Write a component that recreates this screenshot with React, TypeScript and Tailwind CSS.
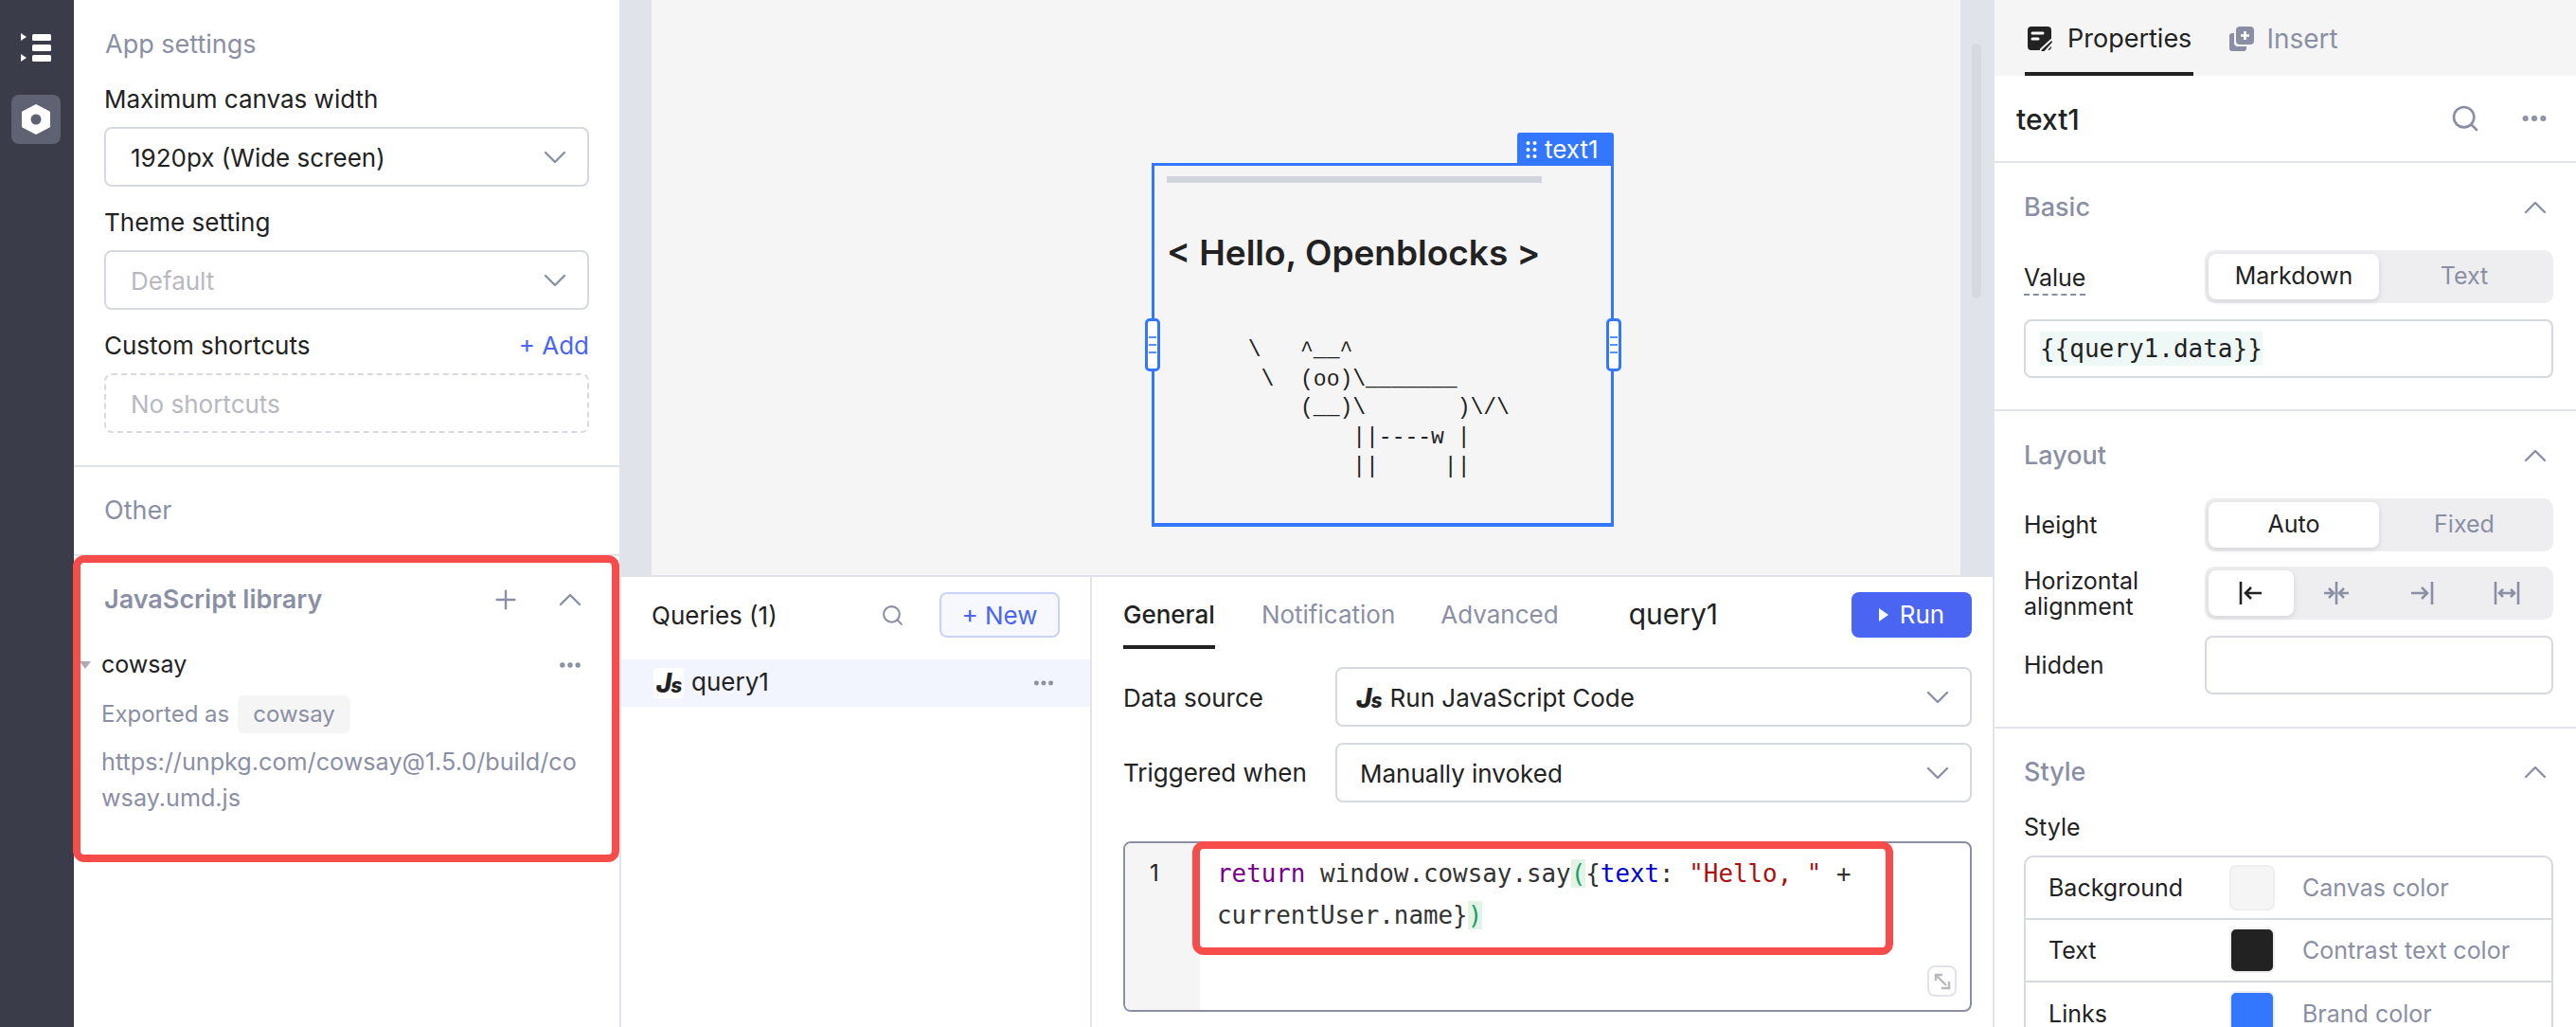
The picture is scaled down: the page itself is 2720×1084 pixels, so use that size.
import React from 'react';
import { MoreHorizontal, Plus, Search } from 'lucide-react';

const Chevron: React.FC<{ up?: boolean }> = ({ up }) => (
  <svg width="24" height="14" viewBox="0 0 24 14" fill="none" stroke="#8b8fa3" strokeWidth="2.4" strokeLinecap="round" strokeLinejoin="round" className={up ? 'rotate-180' : ''}>
    <path d="M2 2l10 10L22 2" />
  </svg>
);

const FieldLabel: React.FC<{ children: React.ReactNode; className?: string }> = ({ children, className = '' }) => (
  <div className={`h-[36px] leading-[36px] text-[26px] text-[#222222] ${className}`}>{children}</div>
);

const SelectBox: React.FC<{ children: React.ReactNode; className?: string }> = ({ children, className = '' }) => (
  <div className={`h-[63px] border-2 border-[#d7d9e0] rounded-[8px] bg-white flex items-center justify-between pl-[26px] pr-[22px] text-[26px] ${className}`}>
    <div className="flex items-center min-w-0 pt-[2px]">{children}</div>
    <Chevron />
  </div>
);

const SectionTitle: React.FC<{ title: string; className?: string }> = ({ title, className = '' }) => (
  <div className={`flex items-center justify-between text-[27px] font-medium text-[#8b8fa3] pt-[2px] pr-[7px] ${className}`}>
    <span>{title}</span>
    <Chevron up />
  </div>
);

const Segmented: React.FC<{ active: string; other: string }> = ({ active, other }) => (
  <div className="w-[368px] h-[56px] rounded-[10px] bg-[#eeeef1] p-[4px] flex text-[25px]">
    <div className="w-[180px] h-[48px] rounded-[8px] bg-white shadow-[0_2px_6px_rgba(0,0,0,0.12)] flex items-center justify-center text-[#222222]">{active}</div>
    <div className="flex-1 flex items-center justify-center text-[#8b8fa3]">{other}</div>
  </div>
);

const JsLogo = () => (
  <span className="italic font-extrabold leading-none text-[#222222] tracking-[-1px] flex items-baseline">
    <span className="text-[28px]">J</span>
    <span className="text-[21px]">s</span>
  </span>
);

const AlignIcon: React.FC<{ kind: 'left' | 'center' | 'right' | 'fill'; color: string }> = ({ kind, color }) => {
  const paths = {
    left: 'M3 2v24M25 14H8M14 8l-6 6 6 6',
    center: 'M14 2v24M1 14h9M6 9l5 5-5 5M27 14h-9M22 9l-5 5 5 5',
    right: 'M25 2v24M3 14h17M14 8l6 6-6 6',
    fill: 'M2 2v24M26 2v24M6 14h16M10 10l-4 4 4 4M18 10l4 4-4 4',
  };
  return (
    <svg width="28" height="28" viewBox="0 0 28 28" fill="none" stroke={color} strokeWidth="2.6">
      <path d={paths[kind]} />
    </svg>
  );
};

const StyleRow: React.FC<{ label: string; swatch: string; hint: string; last?: boolean }> = ({ label, swatch, hint, last }) => (
  <div className={`h-[66px] flex items-center text-[25px] ${last ? '' : 'border-b-2 border-[#d7d9e0]'}`}>
    <span className="w-[215px] pl-[24px] pt-[2px] text-[#222222]">{label}</span>
    <span className="w-[48px] h-[48px] rounded-[7px] border-2 border-[#eeeeee]" style={{ background: swatch }} />
    <span className="ml-[29px] pt-[2px] text-[#8b8fa3]">{hint}</span>
  </div>
);

export default function App() {
  return (
    <div className="relative w-[2720px] h-[1084px] overflow-hidden flex bg-white text-[#222222] font-['Inter',sans-serif]">
      {/* Icon rail */}
      <aside className="w-[78px] shrink-0 bg-[#3a3c49] flex flex-col items-center pt-[35px] pr-[2px]">
        <svg width="32" height="30" viewBox="0 0 32 30" fill="white">
          <path d="M0 0l6 4-6 4zM0 22l6 4-6 4z" />
          <rect x="12" y="1" width="20" height="7" rx="1.5" />
          <rect x="12" y="12" width="20" height="7" rx="1.5" />
          <rect x="12" y="23" width="20" height="7" rx="1.5" />
        </svg>
        <div className="mt-[35px] w-[52px] h-[52px] rounded-[8px] bg-[#5f6273] flex items-center justify-center">
          <svg width="30" height="32" viewBox="0 0 30 32">
            <path d="M15 0.5L29.5 8v16L15 31.5 0.5 24V8z" fill="white" stroke="white" strokeLinejoin="round" />
            <circle cx="15" cy="16" r="5.5" fill="#5f6273" />
          </svg>
        </div>
      </aside>

      {/* App settings */}
      <div className="w-[578px] shrink-0 border-r-2 border-[#e1e3eb]">
        <div className="h-[493px] border-b-2 border-[#e1e3eb] px-[32px]">
          <div className="h-[87px] pt-[27px] pl-[1px] leading-[40px] text-[27px] text-[#8b8fa3]">App settings</div>
          <FieldLabel className="mb-[11px]">Maximum canvas width</FieldLabel>
          <SelectBox>1920px (Wide screen)</SelectBox>
          <FieldLabel className="mt-[20px] mb-[11px]">Theme setting</FieldLabel>
          <SelectBox className="text-[#b8b9bf]">Default</SelectBox>
          <div className="mt-[20px] mb-[11px] flex justify-between">
            <FieldLabel>Custom shortcuts</FieldLabel>
            <FieldLabel className="!text-[#4965f2]">+ Add</FieldLabel>
          </div>
          <div className="h-[63px] border-2 border-dashed border-[#d7d9e0] rounded-[8px] flex items-center pl-[26px] pt-[2px] text-[26px] text-[#b8b9bf]">No shortcuts</div>
        </div>
        <div className="h-[94px] border-b-2 border-[#e1e3eb] px-[32px] flex items-center text-[27px] text-[#8b8fa3]">Other</div>
        <div className="px-[32px]">
          <div className="h-[90px] pt-[2px] flex items-center justify-between text-[27px] font-semibold text-[#8b8fa3]">
            <span>JavaScript library</span>
            <div className="flex items-center gap-[40px]">
              <Plus className="w-[32px] h-[32px]" strokeWidth={1.8} />
              <span className="mr-[8px]"><Chevron up /></span>
            </div>
          </div>
          <div className="relative h-[50px] flex items-center justify-between ml-[-3px] text-[25px]">
            <span className="absolute left-[-23px] top-[21px] w-0 h-0 border-x-[6px] border-x-transparent border-t-[8px] border-t-[#a9abb5]" />
            <span>cowsay</span>
            <MoreHorizontal className="w-[28px] h-[28px] text-[#8b8fa3] mr-[6px]" strokeWidth={2.6} />
          </div>
          <div className="mt-[7px] h-[40px] flex items-center ml-[-3px] text-[24px] text-[#8b8fa3]">
            <span>Exported as</span>
            <span className="ml-[9px] h-[40px] px-[16px] rounded-[6px] bg-[#f5f5f5] flex items-center">cowsay</span>
          </div>
          <div className="mt-[11px] ml-[-3px] w-[510px] leading-[38px] text-[25.2px] text-[#8b8fa3] break-all">
            https://unpkg.com/cowsay@1.5.0/build/cowsay.umd.js
          </div>
        </div>
      </div>

      {/* Canvas and query editor */}
      <div className="w-[1448px] shrink-0 flex flex-col">
        <div className="h-[607px] shrink-0 bg-[#e1e3eb] px-[32px] pr-[34px] flex">
          <div className="relative flex-1 bg-[#f5f5f5] pt-[172px] pl-[528px]">
            <div className="relative w-[488px] h-[384px] border-[3px] border-[#3377ff] border-b-4 pl-[13px] pt-[11px]">
              <div className="absolute right-[-3px] top-[-35px] w-[102px] h-[35px] bg-[#3377ff] rounded-t-[3px] flex items-center pl-[9px] gap-[8px] text-white text-[26px]">
                <svg width="12" height="20" viewBox="0 0 12 20" fill="white">
                  <circle cx="2.5" cy="3" r="2" /><circle cx="9.5" cy="3" r="2" />
                  <circle cx="2.5" cy="10" r="2" /><circle cx="9.5" cy="10" r="2" />
                  <circle cx="2.5" cy="17" r="2" /><circle cx="9.5" cy="17" r="2" />
                </svg>
                text1
              </div>
              {['left-[-10px]', 'right-[-11px]'].map((pos) => (
                <div key={pos} className={`absolute ${pos} top-[161px] w-[16px] h-[56px] bg-white border-[3px] border-[#3377ff] rounded-[5px] flex flex-col items-center justify-center gap-[6px]`}>
                  <span className="w-[8px] h-[2px] bg-[#5b8fff]" />
                  <span className="w-[8px] h-[2px] bg-[#5b8fff]" />
                  <span className="w-[8px] h-[2px] bg-[#5b8fff]" />
                </div>
              ))}
              <div className="w-[396px] h-[7px] bg-[#d1d5db]" />
              <div className="mt-[50px] text-[37px] font-semibold leading-[48px] text-[#222222]">{'< Hello, Openblocks >'}</div>
              <pre className="mt-[64px] ml-[3px] font-['Liberation_Mono',monospace] text-[23px] leading-[30.7px] text-[#222222]">{`      \\   ^__^
       \\  (oo)\\_______
          (__)\\       )\\/\\
              ||----w |
              ||     ||`}</pre>
            </div>
            <div className="absolute right-[-22px] top-[46px] w-[10px] h-[269px] rounded-full bg-[#d7d9e0]" />
          </div>
        </div>

        <div className="flex-1 flex border-t-2 border-[#e1e3eb] bg-white">
          {/* Query list */}
          <div className="w-[497px] shrink-0 border-r-2 border-[#e1e3eb]">
            <div className="h-[80px] flex items-center justify-between pl-[32px] pr-[32px]">
              <span className="text-[26px]">Queries (1)</span>
              <div className="flex items-center gap-[37px]">
                <Search className="w-[25px] h-[25px] text-[#8b8fa3]" strokeWidth={2} />
                <div className="w-[127px] h-[48px] rounded-[8px] border-2 border-[#c9d3fa] bg-[#f6f8fe] flex items-center justify-center text-[26px] text-[#4965f2]">+ New</div>
              </div>
            </div>
            <div className="mt-[7px] h-[50px] bg-[#f2f5fd] flex items-center pl-[34px] pr-[36px] text-[26px]">
              <span className="w-[32px] h-[32px] rounded-[3px] bg-white flex items-center justify-center"><JsLogo /></span>
              <span className="ml-[8px] flex-1 pb-[3px]">query1</span>
              <MoreHorizontal className="w-[26px] h-[26px] text-[#8b8fa3]" strokeWidth={2.6} />
            </div>
          </div>

          {/* Query config */}
          <div className="flex-1 pl-[33px] pr-[22px]">
            <div className="h-[79px] flex items-center text-[26px] text-[#8b8fa3]">
              <div className="relative text-[#222222] font-medium">
                General
                <span className="absolute left-0 right-0 top-[52px] h-[4px] bg-[#222222]" />
              </div>
              <span className="ml-[49px]">Notification</span>
              <span className="ml-[48px]">Advanced</span>
              <span className="ml-[74px] text-[30px] text-[#222222]">query1</span>
              <div className="ml-auto w-[127px] h-[48px] rounded-[8px] bg-[#4965f2] flex items-center justify-center gap-[12px] text-white">
                <svg width="10" height="14" viewBox="0 0 10 14" fill="white"><path d="M0 0l10 7-10 7z" /></svg>
                Run
              </div>
            </div>
            <div className="mt-[16px] flex items-center">
              <span className="w-[224px] pt-[2px] text-[26px]">Data source</span>
              <SelectBox className="flex-1 !pl-[20px]"><JsLogo /><span className="ml-[9px]">Run JavaScript Code</span></SelectBox>
            </div>
            <div className="mt-[17px] flex items-center">
              <span className="w-[224px] text-[26px]">Triggered when</span>
              <SelectBox className="flex-1 !pl-[24px]">Manually invoked</SelectBox>
            </div>
            <div className="relative mt-[41px] h-[180px] rounded-[8px] border-2 border-[#8b8fa3] flex overflow-hidden">
              <div className="w-[79px] bg-[#f5f5f5] pl-[26px] pt-[10px] leading-[44px] text-[24px]">1</div>
              <div className="pl-[18px] pt-[10px] font-['DejaVu_Sans_Mono',monospace] text-[25.87px] leading-[44px] whitespace-pre text-[#333333]">
                <div>
                  <span className="text-[#770088]">return</span> window.cowsay.say<span className="bg-[#e3f4e6] text-[#22a06b]">(</span>{'{'}<span className="text-[#0000cc]">text</span>: <span className="text-[#aa1111]">"Hello, "</span> +
                </div>
                <div>
                  currentUser.name{'}'}<span className="bg-[#e3f4e6] text-[#22a06b]">)</span>
                </div>
              </div>
              <div className="absolute right-[14px] bottom-[14px] w-[31px] h-[33px] rounded-[8px] border-2 border-[#e1e3eb] bg-white flex items-center justify-center">
                <svg width="18" height="20" viewBox="0 0 18 20" fill="none" stroke="#b8b9bf" strokeWidth="2.4"><path d="M2 9V3h7M2 3l11 11M16 10v7H8" /></svg>
              </div>
            </div>
          </div>
        </div>
      </div>

      {/* Properties panel */}
      <div className="w-[616px] shrink-0 border-l-2 border-[#e1e3eb]">
        <div className="h-[80px] bg-[#f5f5f5] flex items-center pl-[32px] text-[27px]">
          <div className="relative h-full flex items-center gap-[15px] px-[2px] pt-[2px]">
            <svg width="28" height="28" viewBox="0 0 28 28">
              <rect x="1" y="1" width="25" height="25" rx="4" fill="#222222" />
              <path d="M6 8h11M6 14h6" stroke="white" strokeWidth="3" strokeLinecap="round" />
              <path d="M27 14L15 25l-1 3h5L28 18z" fill="#222222" stroke="#f5f5f5" strokeWidth="2" />
            </svg>
            Properties
            <span className="absolute left-0 right-0 bottom-0 h-[4px] bg-[#222222]" />
          </div>
          <div className="ml-[37px] pt-[2px] flex items-center gap-[12px] text-[28px] text-[#8b8fa3]">
            <svg width="28" height="28" viewBox="0 0 28 28" fill="#8b8fa3">
              <path d="M1 11a3 3 0 013-3h2v10a4 4 0 004 4h9v2a3 3 0 01-3 3H4a3 3 0 01-3-3z" />
              <rect x="8" y="1" width="19" height="19" rx="4" />
              <path d="M17.5 6v9M13 10.5h9" stroke="white" strokeWidth="2.6" />
            </svg>
            Insert
          </div>
        </div>
        <div className="h-[92px] border-b-2 border-[#e1e3eb] flex items-center justify-between pl-[23px] pr-[28px]">
          <span className="text-[30px] font-medium pt-[2px]">text1</span>
          <div className="flex items-center gap-[41px] text-[#8b8fa3]">
            <Search className="w-[32px] h-[32px]" strokeWidth={2} />
            <MoreHorizontal className="w-[32px] h-[32px]" strokeWidth={2.6} />
          </div>
        </div>

        <div className="h-[262px] border-b-2 border-[#e1e3eb] pl-[31px] pr-[24px]">
          <SectionTitle title="Basic" className="h-[92px]" />
          <div className="flex items-center justify-between">
            <span className="mt-[6px] text-[25px] border-b-2 border-dashed border-[#8b8fa3] leading-[30px] pb-[2px]">Value</span>
            <Segmented active="Markdown" other="Text" />
          </div>
          <div className="mt-[17px] h-[62px] border-2 border-[#d7d9e0] rounded-[8px] flex items-center pl-[15px]">
            <span className="h-[36px] leading-[36px] bg-[#eef8f6] font-['DejaVu_Sans_Mono',monospace] text-[26px] text-[#222222]">{'{{query1.data}}'}</span>
          </div>
        </div>

        <div className="h-[335px] border-b-2 border-[#e1e3eb] pl-[31px] pr-[24px]">
          <SectionTitle title="Layout" className="h-[92px]" />
          <div className="flex items-center justify-between">
            <span className="text-[25px] pt-[2px]">Height</span>
            <Segmented active="Auto" other="Fixed" />
          </div>
          <div className="mt-[16px] flex items-center justify-between">
            <span className="text-[25px] leading-[27px] pt-[2px]">Horizontal<br />alignment</span>
            <div className="w-[368px] h-[56px] rounded-[10px] bg-[#eeeef1] p-[4px] flex">
              <div className="w-[90px] h-[48px] rounded-[8px] bg-white shadow-[0_2px_6px_rgba(0,0,0,0.12)] flex items-center justify-center"><AlignIcon kind="left" color="#222222" /></div>
              <div className="flex-1 flex items-center justify-center"><AlignIcon kind="center" color="#8b8fa3" /></div>
              <div className="flex-1 flex items-center justify-center"><AlignIcon kind="right" color="#8b8fa3" /></div>
              <div className="flex-1 flex items-center justify-center"><AlignIcon kind="fill" color="#8b8fa3" /></div>
            </div>
          </div>
          <div className="mt-[17px] flex items-center justify-between">
            <span className="text-[25px] pt-[2px]">Hidden</span>
            <div className="w-[368px] h-[62px] border-2 border-[#d7d9e0] rounded-[8px]" />
          </div>
        </div>

        <div className="pl-[31px] pr-[24px]">
          <SectionTitle title="Style" className="h-[90px]" />
          <div className="h-[28px] leading-[28px] text-[25px]">Style</div>
          <div className="mt-[16px] border-2 border-[#d7d9e0] rounded-[10px]">
            <StyleRow label="Background" swatch="#f5f5f5" hint="Canvas color" />
            <StyleRow label="Text" swatch="#222222" hint="Contrast text color" />
            <StyleRow label="Links" swatch="#3377ff" hint="Brand color" last />
          </div>
        </div>
      </div>

      {/* Red highlight annotations */}
      <div className="absolute left-[77px] top-[586px] w-[577px] h-[324px] border-[8px] border-[#f74d4a] rounded-[12px]" />
      <div className="absolute left-[1259px] top-[888px] w-[740px] h-[120px] border-[8px] border-[#f74d4a] rounded-[12px]" />
    </div>
  );
}
